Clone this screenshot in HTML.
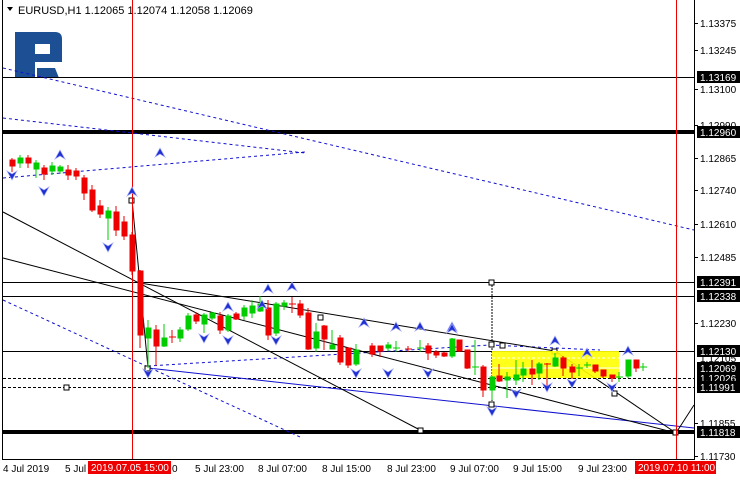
<!DOCTYPE html>
<html><head><meta charset="utf-8"><style>
body{margin:0;background:#fff;}
svg{display:block;font-family:"Liberation Sans",sans-serif;}
</style></head><body>
<svg width="740" height="480" viewBox="0 0 740 480" xmlns="http://www.w3.org/2000/svg">
<rect width="740" height="480" fill="#fff"/>
<!-- frame -->
<line x1="2.5" y1="0" x2="2.5" y2="459" stroke="#000"/>
<line x1="694.5" y1="0" x2="694.5" y2="459" stroke="#000"/>
<line x1="2" y1="459.5" x2="695" y2="459.5" stroke="#000"/>
<!-- logo -->
<path d="M15 32 H55 Q62 32 62 39 V62 H35 V78 H15 Z M35 44 V54 H50 V44 Z" fill="#1c4f93"/>
<path d="M37 68 H55 L59 78 H37 Z" fill="#1c4f93"/>
<!-- title -->
<path d="M7 7 L13 7 L10 11 Z" fill="#000"/>
<text x="18" y="14" font-size="11" fill="#000">EURUSD,H1  1.12065 1.12074 1.12058 1.12069</text>
<!-- horizontal levels -->
<line x1="3" y1="77.5" x2="694" y2="77.5" stroke="#000"/>
<rect x="3" y="130" width="691" height="4" fill="#000"/>
<line x1="3" y1="282.5" x2="694" y2="282.5" stroke="#000"/>
<line x1="3" y1="296.5" x2="694" y2="296.5" stroke="#000"/>
<line x1="3" y1="351.5" x2="694" y2="351.5" stroke="#000"/>
<line x1="3" y1="378.5" x2="694" y2="378.5" stroke="#000" stroke-dasharray="3,2"/>
<line x1="3" y1="387.5" x2="694" y2="387.5" stroke="#000" stroke-dasharray="3,2"/>
<rect x="3" y="430" width="691" height="4" fill="#000"/>
<!-- blue dotted lines -->
<g stroke="#1010d0" fill="none" stroke-dasharray="3,3">
<line x1="3" y1="68" x2="694" y2="230"/>
<line x1="3" y1="118" x2="305" y2="153"/>
<line x1="3" y1="178" x2="305" y2="152"/>
<line x1="3" y1="300" x2="300" y2="437"/>
<line x1="148" y1="366" x2="490" y2="345"/>
<line x1="490" y1="345" x2="600" y2="350"/>
</g>
<line x1="148" y1="368" x2="694" y2="428" stroke="#1010d0"/>
<!-- black trend lines -->
<g stroke="#000" fill="none">
<line x1="3" y1="212" x2="420" y2="430"/>
<line x1="3" y1="258" x2="676" y2="433"/>
<line x1="140" y1="283" x2="555" y2="351"/>
<line x1="555" y1="351" x2="676" y2="433"/>
<line x1="676" y1="433" x2="694" y2="405"/>
<line x1="132" y1="200" x2="148" y2="368"/>
<line x1="492" y1="282" x2="492" y2="405" stroke-dasharray="2,1"/>
</g>
<g fill="#fff" stroke="#000">
<rect x="129" y="198" width="5" height="5"/><rect x="145" y="366" width="5" height="5"/>
<rect x="489" y="280" width="5" height="5"/><rect x="489" y="342" width="5" height="5"/><rect x="500" y="343" width="5" height="5"/>
<rect x="489" y="402" width="5" height="5"/><rect x="552" y="349" width="5" height="5"/><rect x="612" y="391" width="5" height="5"/>
<rect x="673" y="430" width="5" height="5"/><rect x="318" y="315" width="5" height="5"/><rect x="418" y="428" width="5" height="5"/>
<rect x="64" y="385" width="5" height="5"/>
</g>
<!-- yellow box -->
<rect x="492" y="351" width="127" height="27" fill="#ffff00" opacity="0.9"/>
<line x1="492" y1="368" x2="619" y2="368" stroke="#fff"/>
<line x1="492" y1="358" x2="619" y2="358" stroke="#fff" stroke-dasharray="3,2"/>
<!-- red vertical lines -->
<line x1="132.5" y1="0" x2="132.5" y2="459" stroke="#e00"/>
<line x1="676.5" y1="0" x2="676.5" y2="459" stroke="#e00"/>
<!-- candles -->
<g stroke-width="1">
<g stroke="#e00" fill="#e00">
<line x1="12" y1="158" x2="12" y2="172"/><rect x="10" y="160" width="5" height="6"/>
<line x1="28" y1="155" x2="28" y2="168"/><rect x="26" y="158" width="5" height="5"/>
<line x1="44" y1="165" x2="44" y2="180"/><rect x="42" y="168" width="5" height="6"/>
<line x1="68" y1="165" x2="68" y2="180"/><rect x="66" y="170" width="5" height="5"/>
<line x1="76" y1="168" x2="76" y2="180"/><rect x="74" y="171" width="5" height="5"/>
<line x1="84" y1="175" x2="84" y2="200"/><rect x="82" y="178" width="5" height="15"/>
<line x1="92" y1="185" x2="92" y2="212"/><rect x="90" y="190" width="5" height="20"/>
<line x1="100" y1="200" x2="100" y2="218"/><rect x="98" y="206" width="5" height="8"/>
<line x1="116" y1="206" x2="116" y2="236"/><rect x="114" y="212" width="5" height="18"/>
<line x1="124" y1="216" x2="124" y2="240"/><rect x="122" y="222" width="5" height="14"/>
<line x1="132" y1="232" x2="132" y2="275"/><rect x="130" y="235" width="5" height="36"/>
<line x1="140" y1="270" x2="140" y2="348"/><rect x="138" y="271" width="5" height="64"/>
<line x1="156" y1="325" x2="156" y2="366"/><rect x="154" y="330" width="5" height="16"/>
<line x1="172" y1="330" x2="172" y2="343"/><line x1="169" y1="337" x2="176" y2="337"/>
<line x1="196" y1="312" x2="196" y2="324"/><rect x="194" y="315" width="5" height="6"/>
<line x1="220" y1="312" x2="220" y2="334"/><rect x="218" y="316" width="5" height="14"/>
<line x1="236" y1="312" x2="236" y2="320"/><rect x="234" y="314" width="5" height="5"/>
<line x1="268" y1="300" x2="268" y2="340"/><rect x="266" y="308" width="5" height="27"/>
<line x1="292" y1="297" x2="292" y2="313"/><line x1="289" y1="304" x2="296" y2="304"/>
<line x1="300" y1="300" x2="300" y2="318"/><rect x="298" y="304" width="5" height="11"/>
<line x1="308" y1="308" x2="308" y2="350"/><rect x="306" y="313" width="5" height="36"/>
<line x1="324" y1="325" x2="324" y2="350"/><rect x="322" y="326" width="5" height="13"/>
<line x1="340" y1="335" x2="340" y2="365"/><rect x="338" y="338" width="5" height="24"/>
<line x1="348" y1="348" x2="348" y2="368"/><rect x="346" y="348" width="5" height="17"/>
<line x1="372" y1="343" x2="372" y2="357"/><rect x="370" y="346" width="5" height="8"/>
<line x1="380" y1="346" x2="380" y2="357"/><rect x="378" y="346" width="5" height="5"/>
<line x1="408" y1="346" x2="408" y2="352"/><line x1="405" y1="349" x2="412" y2="349"/>
<line x1="428" y1="343" x2="428" y2="360"/><rect x="426" y="346" width="5" height="7"/>
<line x1="436" y1="350" x2="436" y2="358"/><rect x="434" y="352" width="5" height="3"/>
<line x1="444" y1="352" x2="444" y2="357"/><rect x="442" y="353" width="5" height="3"/>
<line x1="459" y1="340" x2="459" y2="352"/><rect x="457" y="340" width="5" height="11"/>
<line x1="467" y1="350" x2="467" y2="369"/><rect x="465" y="350" width="5" height="18"/>
<line x1="483" y1="365" x2="483" y2="397"/><rect x="481" y="367" width="5" height="23"/>
<line x1="499" y1="364" x2="499" y2="382"/><rect x="497" y="376" width="5" height="5"/>
<line x1="532" y1="360" x2="532" y2="385"/><rect x="530" y="369" width="5" height="5"/>
<line x1="547" y1="363" x2="547" y2="388"/><line x1="544" y1="364" x2="551" y2="364"/>
<line x1="563" y1="356" x2="563" y2="376"/><rect x="561" y="358" width="5" height="10"/>
<line x1="572" y1="364" x2="572" y2="379"/><rect x="570" y="367" width="5" height="5"/>
<line x1="595" y1="365" x2="595" y2="373"/><rect x="593" y="365" width="5" height="6"/>
<line x1="603" y1="370" x2="603" y2="378"/><rect x="601" y="370" width="5" height="6"/>
<line x1="612" y1="375" x2="612" y2="382"/><rect x="610" y="375" width="5" height="3"/>
<line x1="636" y1="360" x2="636" y2="372"/><rect x="634" y="360" width="5" height="8"/>
</g>
<g stroke="#0c0" fill="#0c0">
<line x1="20" y1="155" x2="20" y2="168"/><rect x="18" y="158" width="5" height="5"/>
<line x1="36" y1="160" x2="36" y2="178"/><rect x="34" y="163" width="5" height="6"/>
<line x1="52" y1="162" x2="52" y2="175"/><rect x="50" y="166" width="5" height="5"/>
<line x1="60" y1="165" x2="60" y2="174"/><rect x="58" y="167" width="5" height="4"/>
<line x1="108" y1="207" x2="108" y2="240"/><rect x="106" y="211" width="5" height="7"/>
<line x1="148" y1="320" x2="148" y2="368"/><rect x="146" y="328" width="5" height="10"/>
<line x1="164" y1="324" x2="164" y2="347"/><rect x="162" y="338" width="5" height="8"/>
<line x1="180" y1="327" x2="180" y2="342"/><rect x="178" y="330" width="5" height="8"/>
<line x1="188" y1="313" x2="188" y2="331"/><rect x="186" y="316" width="5" height="13"/>
<line x1="204" y1="313" x2="204" y2="333"/><rect x="202" y="315" width="5" height="9"/>
<line x1="212" y1="312" x2="212" y2="320"/><rect x="210" y="313" width="5" height="5"/>
<line x1="228" y1="314" x2="228" y2="332"/><rect x="226" y="316" width="5" height="14"/>
<line x1="244" y1="305" x2="244" y2="320"/><rect x="242" y="308" width="5" height="8"/>
<line x1="252" y1="300" x2="252" y2="318"/><rect x="250" y="306" width="5" height="7"/>
<line x1="260" y1="296" x2="260" y2="312"/><rect x="258" y="304" width="5" height="7"/>
<line x1="276" y1="302" x2="276" y2="336"/><rect x="274" y="304" width="5" height="29"/>
<line x1="284" y1="300" x2="284" y2="310"/><rect x="282" y="303" width="5" height="3"/>
<line x1="316" y1="323" x2="316" y2="352"/><rect x="314" y="332" width="5" height="16"/>
<line x1="332" y1="330" x2="332" y2="348"/><rect x="330" y="345" width="5" height="4"/>
<line x1="356" y1="344" x2="356" y2="366"/><rect x="354" y="350" width="5" height="14"/>
<line x1="388" y1="342" x2="388" y2="351"/><rect x="386" y="345" width="5" height="3"/>
<line x1="396" y1="341" x2="396" y2="352"/><line x1="393" y1="348" x2="400" y2="348"/>
<line x1="420" y1="340" x2="420" y2="352"/><line x1="417" y1="348" x2="424" y2="348"/>
<line x1="452" y1="338" x2="452" y2="358"/><rect x="450" y="339" width="5" height="17"/>
<line x1="475" y1="340" x2="475" y2="375"/><line x1="472" y1="367" x2="479" y2="367"/>
<line x1="492" y1="376" x2="492" y2="400"/><rect x="490" y="377" width="5" height="13"/>
<line x1="507" y1="372" x2="507" y2="398"/><rect x="505" y="377" width="5" height="3"/>
<line x1="516" y1="360" x2="516" y2="385"/><rect x="514" y="375" width="5" height="5"/>
<line x1="523" y1="362" x2="523" y2="382"/><rect x="521" y="369" width="5" height="6"/>
<line x1="539" y1="362" x2="539" y2="380"/><rect x="537" y="364" width="5" height="9"/>
<line x1="555" y1="353" x2="555" y2="367"/><rect x="553" y="358" width="5" height="8"/>
<line x1="579" y1="364" x2="579" y2="376"/><line x1="576" y1="368" x2="583" y2="368"/>
<line x1="587" y1="362" x2="587" y2="368"/><line x1="584" y1="365" x2="591" y2="365"/>
<line x1="619" y1="372" x2="619" y2="382"/><line x1="616" y1="377" x2="623" y2="377"/>
<line x1="628" y1="360" x2="628" y2="378"/><rect x="626" y="360" width="5" height="16"/>
<line x1="643" y1="363" x2="643" y2="371"/><line x1="640" y1="367" x2="647" y2="367"/>
</g>
</g>
<!-- arrows -->
<g fill="#2030d0" stroke="#a0a8ff" stroke-width="0.7">
<path d="M60 150 l-5 9 l5 -3 l5 3 z"/><path d="M132 187 l-5 9 l5 -3 l5 3 z"/><path d="M262 300 l-5 9 l5 -3 l5 3 z"/>
<path d="M228 302 l-5 9 l5 -3 l5 3 z"/><path d="M292 282 l-5 9 l5 -3 l5 3 z"/><path d="M268 284 l-5 9 l5 -3 l5 3 z"/>
<path d="M364 318 l-5 9 l5 -3 l5 3 z"/><path d="M396 322 l-5 9 l5 -3 l5 3 z"/><path d="M420 322 l-5 9 l5 -3 l5 3 z"/>
<path d="M452 322 l-5 9 l5 -3 l5 3 z"/><path d="M452 324 l-5 9 l5 -3 l5 3 z"/><path d="M555 336 l-5 9 l5 -3 l5 3 z"/>
<path d="M587 348 l-5 9 l5 -3 l5 3 z"/><path d="M628 346 l-5 9 l5 -3 l5 3 z"/><path d="M160 148 l-5 9 l5 -3 l5 3 z"/>
<path d="M12 180 l-5 -9 l5 3 l5 -3 z"/><path d="M44 196 l-5 -9 l5 3 l5 -3 z"/><path d="M108 252 l-5 -9 l5 3 l5 -3 z"/>
<path d="M148 378 l-5 -9 l5 3 l5 -3 z"/><path d="M204 343 l-5 -9 l5 3 l5 -3 z"/><path d="M228 345 l-5 -9 l5 3 l5 -3 z"/>
<path d="M276 345 l-5 -9 l5 3 l5 -3 z"/><path d="M356 378 l-5 -9 l5 3 l5 -3 z"/><path d="M388 378 l-5 -9 l5 3 l5 -3 z"/>
<path d="M428 378 l-5 -9 l5 3 l5 -3 z"/><path d="M492 416 l-5 -9 l5 3 l5 -3 z"/><path d="M516 398 l-5 -9 l5 3 l5 -3 z"/>
<path d="M547 392 l-5 -9 l5 3 l5 -3 z"/><path d="M572 388 l-5 -9 l5 3 l5 -3 z"/><path d="M612 392 l-5 -9 l5 3 l5 -3 z"/>
</g>
<!-- right axis -->
<g font-size="10" fill="#000">
<g stroke="#000"><line x1="694" y1="23.5" x2="698" y2="23.5"/><line x1="694" y1="50.5" x2="698" y2="50.5"/><line x1="694" y1="89.5" x2="698" y2="89.5"/><line x1="694" y1="125.5" x2="698" y2="125.5"/><line x1="694" y1="158.5" x2="698" y2="158.5"/><line x1="694" y1="190.5" x2="698" y2="190.5"/><line x1="694" y1="224.5" x2="698" y2="224.5"/><line x1="694" y1="257.5" x2="698" y2="257.5"/><line x1="694" y1="323.5" x2="698" y2="323.5"/><line x1="694" y1="423.5" x2="698" y2="423.5"/><line x1="694" y1="456.5" x2="698" y2="456.5"/></g>
<text x="700" y="27">1.13375</text><text x="700" y="54">1.13245</text><text x="700" y="93">1.13100</text>
<text x="700" y="129">1.12990</text><text x="700" y="162">1.12865</text><text x="700" y="194">1.12740</text>
<text x="700" y="228">1.12610</text><text x="700" y="261">1.12485</text><text x="700" y="327">1.12230</text>
<text x="700" y="362">1.12105</text><text x="700" y="391">1.11966</text><text x="700" y="427">1.11855</text><text x="700" y="460">1.11730</text>
</g>
<g font-size="10">
<rect x="697" y="71" width="43" height="12" fill="#000"/><text x="700" y="81" fill="#fff">1.13169</text>
<rect x="697" y="126" width="43" height="12" fill="#000"/><text x="700" y="136" fill="#fff">1.12960</text>
<rect x="697" y="276" width="43" height="12" fill="#000"/><text x="700" y="286" fill="#fff">1.12391</text>
<rect x="697" y="290" width="43" height="12" fill="#000"/><text x="700" y="300" fill="#fff">1.12338</text>
<rect x="697" y="345" width="43" height="12" fill="#000"/><text x="700" y="355" fill="#fff">1.12130</text>
<rect x="697" y="362" width="43" height="12" fill="#000"/><text x="700" y="372" fill="#fff">1.12069</text>
<rect x="697" y="372" width="43" height="12" fill="#000"/><text x="700" y="382" fill="#fff">1.12026</text>
<rect x="697" y="381" width="43" height="12" fill="#000"/><text x="700" y="391" fill="#fff">1.11991</text>
<rect x="697" y="426" width="43" height="12" fill="#000"/><text x="700" y="436" fill="#fff">1.11818</text>
</g>
<!-- bottom axis -->
<g font-size="10" fill="#000">
<text x="3" y="472">4 Jul 2019</text><text x="65" y="472">5 Jul 0</text><text x="172" y="472">0</text>
<text x="195" y="472">5 Jul 23:00</text><text x="258" y="472">8 Jul 07:00</text><text x="322" y="472">8 Jul 15:00</text>
<text x="387" y="472">8 Jul 23:00</text><text x="450" y="472">9 Jul 07:00</text><text x="513" y="472">9 Jul 15:00</text>
<text x="578" y="472">9 Jul 23:00</text>
</g>
<rect x="88" y="461" width="83" height="13" fill="#e00"/><text x="91" y="471" font-size="10" fill="#fff">2019.07.05 15:00</text>
<rect x="635" y="461" width="81" height="13" fill="#e00"/><text x="638" y="471" font-size="10" fill="#fff">2019.07.10 11:00</text>
</svg>
</body></html>
